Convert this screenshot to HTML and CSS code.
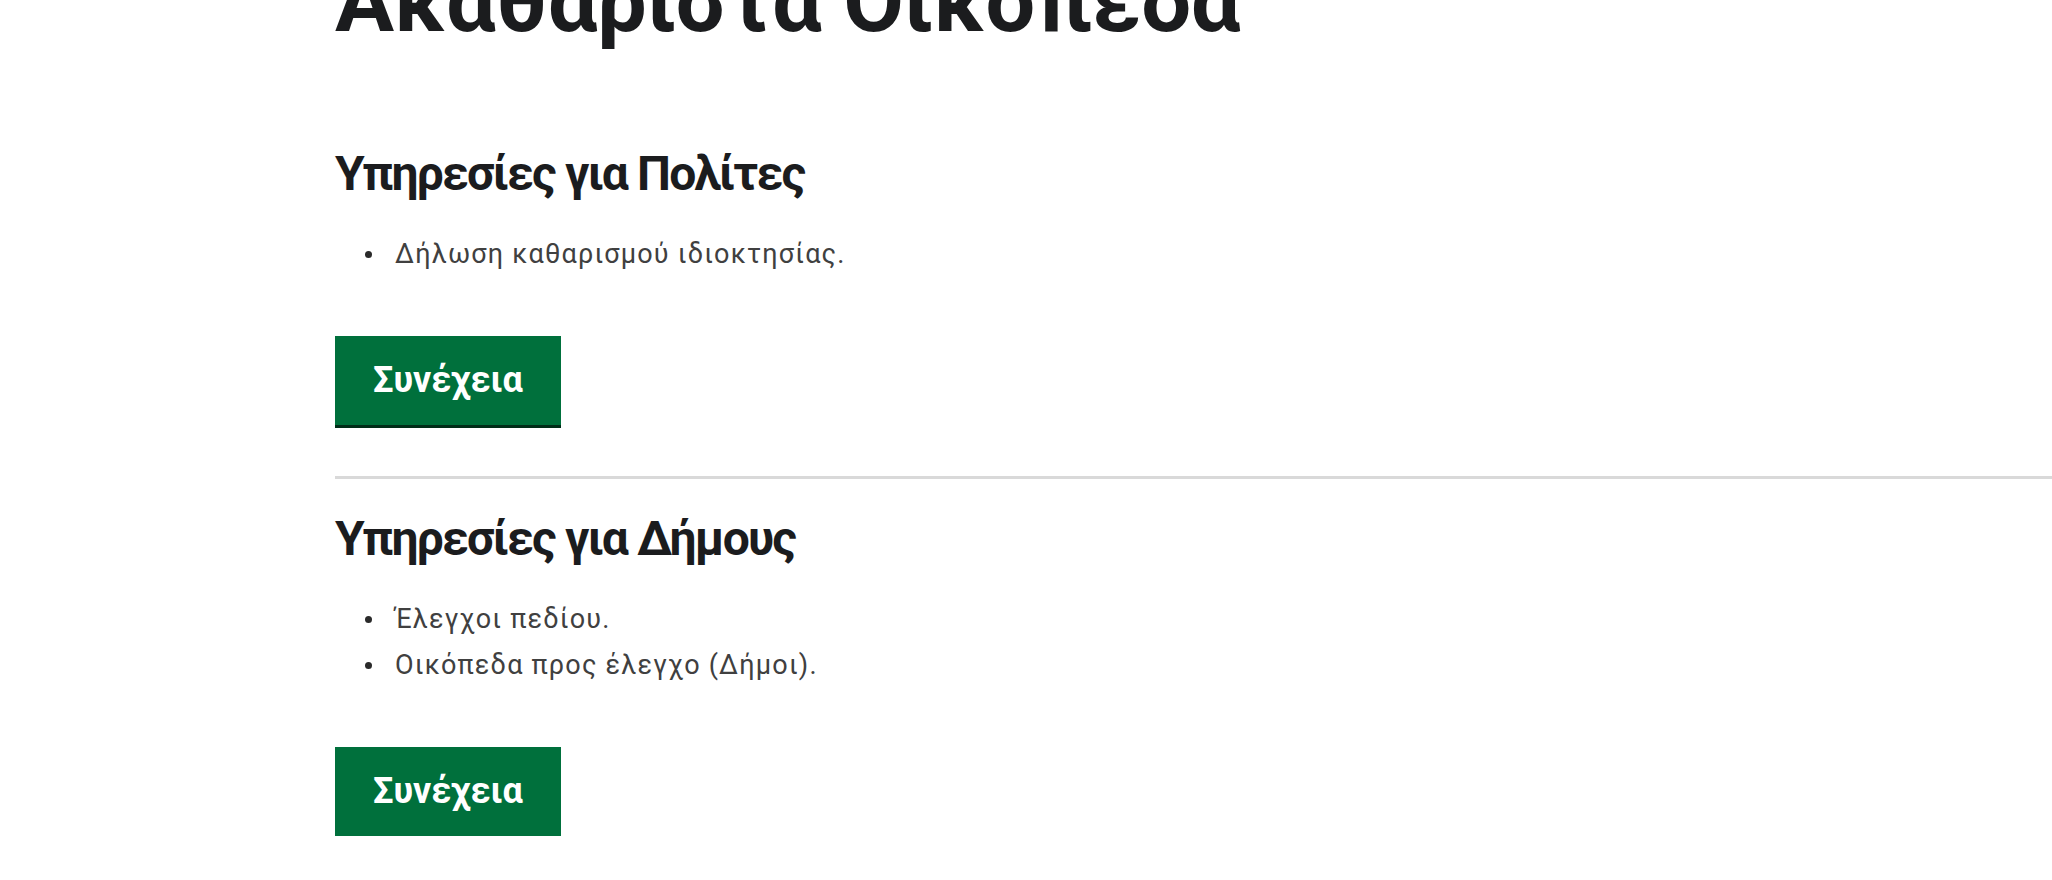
FILE: index.html
```html
<!DOCTYPE html>
<html lang="el">
<head>
    <meta charset="UTF-8">
    <meta name="viewport" content="width=device-width, initial-scale=1.0">
    <title>Ακαθάριστα Οικόπεδα</title>
    <link rel="stylesheet" href="styles.css">
</head>
<body>
<main class="page">
    <h1 class="page-title">Ακαθάριστα Οικόπεδα</h1>

    <section class="service">
        <h2 class="service-title">Υπηρεσίες για Πολίτες</h2>
        <ul class="service-list">
            <li>Δήλωση καθαρισμού ιδιοκτησίας.</li>
        </ul>
        <a class="btn" href="#">Συνέχεια</a>
    </section>

    <hr class="section-break">

    <section class="service">
        <h2 class="service-title">Υπηρεσίες για Δήμους</h2>
        <ul class="service-list">
            <li>Έλεγχοι πεδίου.</li>
            <li>Οικόπεδα προς έλεγχο (Δήμοι).</li>
        </ul>
        <a class="btn" href="#">Συνέχεια</a>
    </section>
</main>
</body>
</html>
```

FILE: styles.css
```css
:root {
    --heading-color: #1b1c1e;
    --text-color: #404040;
    --green: #00703c;
    --green-shadow: #002d18;
    --rule-color: #d9d9d9;
}

* {
    margin: 0;
    padding: 0;
    box-sizing: border-box;
}

body {
    font-family: Roboto, "Noto Sans", "Liberation Sans", sans-serif;
    background: #fff;
    color: var(--text-color);
    overflow: hidden;
}

.page {
    padding-left: 335px;
}

.page-title {
    color: var(--heading-color);
    font-size: 88px;
    font-weight: 700;
    line-height: 90px;
    margin-top: -44px;
    margin-bottom: 100px;
}

.service-title {
    color: var(--heading-color);
    font-size: 48px;
    font-weight: 700;
    line-height: 56px;
    letter-spacing: -1.8px;
    margin-bottom: 29px;
}

/* list with small round bullets */
.service-list {
    list-style: none;
    padding-left: 30px;
    margin-bottom: 59px;
    font-size: 27px;
    line-height: 46px;
    letter-spacing: 1.2px;
}

.service-list li {
    display: flex;
    align-items: center;
    gap: 23px;
}

.service-list li::before {
    content: '';
    flex: none;
    width: 7px;
    height: 7px;
    border-radius: 50%;
    background: #2a2a2a;
}

.btn {
    display: inline-block;
    background: var(--green);
    color: #fff;
    font-size: 36px;
    font-weight: 700;
    line-height: 45px;
    padding: 22px 38px;
    text-decoration: none;
    box-shadow: 0 3px 0 var(--green-shadow);
}

.section-break {
    border: 0;
    height: 3px;
    background: var(--rule-color);
    margin: 51px 0 32px;
}
```
